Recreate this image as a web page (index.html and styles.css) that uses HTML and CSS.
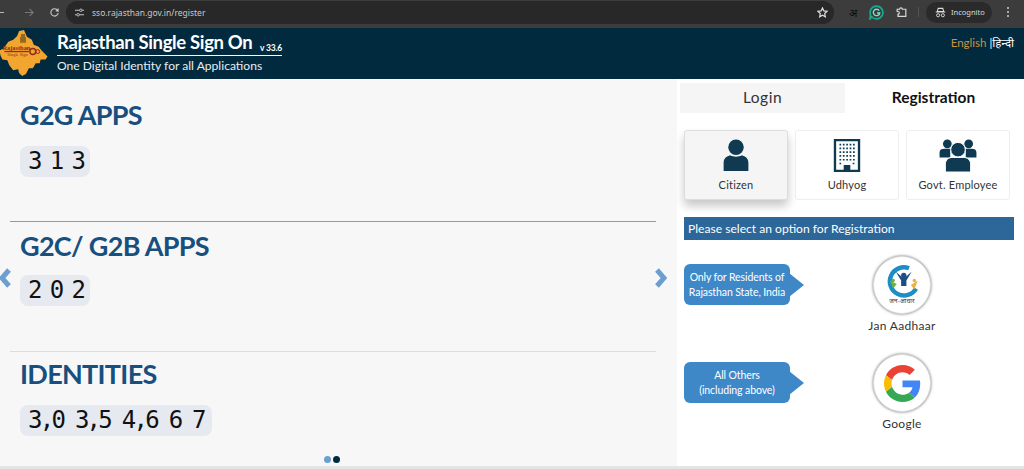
FILE: index.html
```html
<!DOCTYPE html>
<html lang="en">
<head>
<meta charset="utf-8">
<title>Rajasthan Single Sign On</title>
<link rel="stylesheet" href="styles.css">
</head>
<body>
<div class="toolbar">
  <div class="nav">
    <svg class="ico back" viewBox="0 0 12 12"><path d="M11 6H2M6 2 2 6l4 4" fill="none" stroke="#b9b9b9" stroke-width="1.2"/></svg>
    <svg class="ico fwd" viewBox="0 0 12 12"><path d="M1 6h9M6 2l4 4-4 4" fill="none" stroke="#777" stroke-width="1.2"/></svg>
    <svg class="ico" viewBox="0 0 12 12"><path d="M10 6.5A4 4 0 1 1 8.8 3L10 4.2V1.5M10 4.2H7.4" fill="none" stroke="#c8c8c8" stroke-width="1.2"/></svg>
  </div>
  <div class="omnibox">
    <svg class="tune" viewBox="0 0 12 10"><path d="M1 2.5h5M9 2.5h2M1 7.5h2M6 7.5h5" stroke="#c8c8c8" stroke-width="1.1"/><circle cx="7.5" cy="2.5" r="1.4" fill="none" stroke="#c8c8c8"/><circle cx="4.5" cy="7.5" r="1.4" fill="none" stroke="#c8c8c8"/></svg>
    <span class="url">sso.rajasthan.gov.in/register</span>
    <svg class="star" viewBox="0 0 12 12"><path d="m6 1 1.5 3.3 3.5.4-2.6 2.4.7 3.6L6 8.900 2.900 10.700l.7-3.600L1 4.700l3.500-.4z" fill="none" stroke="#dedede" stroke-width="1.3"/></svg>
  </div>
  <div class="ext">
    <span class="ext-a">अ</span>
    <svg class="ext-g" viewBox="0 0 14 14"><path d="M7 1a6 6 0 1 1-4.500 10L1 13l.4-4A6 6 0 0 1 7 1z" fill="none" stroke="#17a98d" stroke-width="1.600"/><path d="M9.500 5.200A3 3 0 1 0 10 7.500H7.500" fill="none" stroke="#7fe0cf" stroke-width="1.300"/></svg>
    <svg class="ext-p" viewBox="0 0 12 12"><path d="M2 3h2.200a1.300 1.300 0 0 1 2.600 0H10v6.500H2.800V7.500a1.200 1.200 0 0 0 0-2.400H2z" fill="none" stroke="#d8d8d8" stroke-width="1.100"/></svg>
    <i class="ext-sep"></i>
    <div class="incognito">
      <svg viewBox="0 0 12 12"><path d="M3.500 1.500h5l1 3.500h-7zM.8 5.500h10.400" fill="none" stroke="#ddd" stroke-width="1.100"/><circle cx="3.400" cy="9" r="1.700" fill="none" stroke="#ddd"/><circle cx="8.600" cy="9" r="1.700" fill="none" stroke="#ddd"/></svg>
      <span>Incognito</span>
    </div>
    <span class="kebab"><i></i><i></i><i></i></span>
  </div>
</div>

<header class="site-head">
  <svg class="logo" viewBox="0 0 48 48">
    <path d="M19 1l5-1 3 7 5 3 2 5 5 2 3 4 6 6-2 3-5 0-1 4-4 0-3 5-4 0-3 6-4 2-3-3-1-4-5 1-4-5-2-5-5-1-2-4-1-5 4-2 5-7 5-2 4-4z" fill="#f2a52f"/>
    <path d="M21 4h4v2l1 2v5h-6V8l1-2z" fill="#8f6a1f"/>
    <text class="logo-text" x="2" y="20">Rajasthan</text>
    <path d="M4 22h25" stroke="#8d2c1c" stroke-width="1.300"/>
    <circle cx="33" cy="22" r="3" fill="none" stroke="#8d2c1c" stroke-width="1.500"/>
    <circle cx="38" cy="22" r="2" fill="none" stroke="#8d2c1c"/>
    <text class="logo-text logo-small" x="7" y="27">Single Sign</text>
  </svg>
  <div class="brand">
    <div class="brand-top"><span class="brand-name">Rajasthan Single Sign On</span><span class="brand-ver">v 33.6</span></div>
    <div class="brand-sub">One Digital Identity for all Applications</div>
  </div>
  <div class="lang"><span class="lang-on">English</span> <span class="lang-off">|हिन्दी</span></div>
</header>

<main class="main">
  <section class="stats">
    <span class="arrow arrow-l"><svg viewBox="0 0 12 20"><path d="M10 2 3 10l7 8" fill="none" stroke="#6a9fd0" stroke-width="5"/></svg></span>
    <span class="arrow arrow-r"><svg viewBox="0 0 12 20"><path d="M2 2l7 8-7 8" fill="none" stroke="#6a9fd0" stroke-width="5"/></svg></span>
    <div class="stat stat-first">
      <h2>G2G APPS</h2>
      <div class="count">3 1 3</div>
    </div>
    <div class="stat stat-second">
      <h2>G2C/ G2B APPS</h2>
      <div class="count">2 0 2</div>
    </div>
    <div class="stat stat-last">
      <h2>IDENTITIES</h2>
      <div class="count count-wide">3,0 3,5 4,6 6 7</div>
    </div>
    <div class="dots"><i class="dot"></i><i class="dot dot-on"></i></div>
  </section>

  <aside class="side">
    <div class="tabs">
      <div class="tab tab-off">Login</div>
      <div class="tab tab-on">Registration</div>
    </div>
    <div class="cards">
      <div class="card card-on">
        <svg class="card-ico" viewBox="0 0 26 32"><circle cx="13" cy="8" r="7.500" fill="#0f3a52"/><path d="M1 31v-8c0-5 4-7 7-7 1.500 1.500 8.500 1.500 10 0 3 0 7 2 7 7v8z" fill="#0f3a52"/></svg>
        <span>Citizen</span>
      </div>
      <div class="card">
        <svg class="card-ico" viewBox="0 0 28 35"><path d="M0 0h28v35H0z" fill="#0f3a52"/><path d="M2.500 2.500h23v30h-8v-5h-7v5h-8z" fill="#fff"/><path d="M6 6h17M6 10h17M6 14h17M6 18h17M6 22h17M6 26h3M20 26h3" stroke="#0f3a52" stroke-width="1.800" stroke-dasharray="1.800 1.800"/></svg>
        <span>Udhyog</span>
      </div>
      <div class="card">
        <svg class="card-ico card-ico-wide" viewBox="0 0 38 34"><circle cx="8" cy="5" r="4.500" fill="#0f3a52"/><circle cx="30" cy="5" r="4.500" fill="#0f3a52"/><path d="M0 19v-5c0-3 2-4 5-4h6v9zM38 19v-5c0-3-2-4-5-4h-6v9z" fill="#0f3a52"/><circle cx="19" cy="11" r="7.500" fill="#0f3a52" stroke="#fff"/><path d="M6 34v-8c0-5 4-7 7-7h12c3 0 7 2 7 7v8z" fill="#0f3a52" stroke="#fff"/></svg>
        <span>Govt. Employee</span>
      </div>
    </div>
    <div class="notice">Please select an option for Registration</div>
    <div class="option">
      <div class="bubble"><span>Only for Residents of<br>Rajasthan State, India</span></div>
      <div class="provider">
        <div class="round">
          <svg viewBox="0 0 50 50">
            <path d="M33 6a16 16 0 1 0 8 23" fill="none" stroke="#1c8dc5" stroke-width="5"/>
            <circle cx="27" cy="14" r="3" fill="#1f4d86"/>
            <path d="M18 10l6 10v6h6v-6l6-10-7 6h-4z" fill="#1f4d86"/>
            <circle cx="15" cy="20" r="2" fill="#6cb13f"/><path d="M11 20l4 9 4-5z" fill="#6cb13f"/>
            <circle cx="39" cy="20" r="2" fill="#efb03f"/><path d="M43 20l-4 10-4-5z" fill="#efb03f"/>
            <text class="ja-text" x="25" y="46">जन-आधार</text>
          </svg>
        </div>
        <span>Jan Aadhaar</span>
      </div>
    </div>
    <div class="option">
      <div class="bubble"><span class="center">All Others<br>(including above)</span></div>
      <div class="provider">
        <div class="round">
          <svg viewBox="0 0 48 48" class="g">
            <path fill="#EA4335" d="M24 9.500c3.540 0 6.710 1.220 9.210 3.600l6.850-6.850C35.900 2.380 30.470 0 24 0 14.620 0 6.510 5.380 2.560 13.220l7.980 6.190C12.430 13.720 17.740 9.500 24 9.500z"/>
            <path fill="#4285F4" d="M46.980 24.550c0-1.570-.15-3.090-.38-4.550H24v9.020h12.940c-.58 2.960-2.260 5.480-4.780 7.180l7.730 6c4.510-4.180 7.090-10.360 7.090-17.650z"/>
            <path fill="#FBBC05" d="M10.530 28.590c-.48-1.450-.76-2.990-.76-4.590s.27-3.140.76-4.590l-7.980-6.190C.92 16.460 0 20.120 0 24c0 3.880.92 7.540 2.560 10.780l7.970-6.190z"/>
            <path fill="#34A853" d="M24 48c6.480 0 11.930-2.130 15.890-5.810l-7.730-6c-2.150 1.450-4.920 2.300-8.160 2.300-6.260 0-11.570-4.220-13.470-9.910l-7.980 6.190C6.510 42.620 14.620 48 24 48z"/>
          </svg>
        </div>
        <span>Google</span>
      </div>
    </div>
  </aside>
</main>
</body>
</html>
```
FILE: styles.css
```css
* { box-sizing: border-box; }
html, body { margin: 0; height: 469px; overflow: hidden; }
body { width: 1024px; background: #e4e4e4; font-family: Lato, "Noto Sans", "Noto Sans CJK SC", sans-serif; color: #333; }

.toolbar { display: flex; align-items: center; height: 28px; background: #3c3c3c; padding-bottom: 4px; font-family: "Noto Sans", sans-serif; }
.nav { display: flex; align-items: center; width: 66px; gap: 14px; flex: none; }
.ico { width: 11px; height: 11px; flex: none; }
.back { margin-left: -6px; }
.fwd { margin-left: 5px; }
.omnibox { display: flex; align-items: center; width: 768px; height: 23px; border-radius: 12px; background: #282828; padding: 0 8px; }
.tune { width: 11px; height: 9px; margin-right: 7px; }
.url { font-size: 8.5px; color: #c9c9c9; flex: 1; }
.star { width: 11px; height: 11px; margin-right: -2px; }
.ext { display: flex; align-items: center; flex: 1; height: 23px; }
.ext-a { font-size: 11px; color: #0a0a0a; margin-left: 15px; width: 12px; }
.ext-g { width: 15px; height: 15px; margin-left: 8px; }
.ext-p { width: 13px; height: 13px; margin-left: 11px; }
.ext-sep { width: 1px; height: 10px; background: #555; margin-left: 10px; }
.incognito { display: flex; align-items: center; gap: 5px; width: 66px; height: 21px; border-radius: 11px; background: #2a2a2a; margin-left: 7px; padding-left: 9px; font-size: 7.5px; color: #ddd; }
.incognito svg { width: 11px; height: 11px; }
.kebab { display: flex; flex-direction: column; gap: 2px; margin-left: 15px; }
.kebab i { width: 2px; height: 2px; border-radius: 50%; background: #ccc; }

.site-head { display: flex; height: 51px; background: #012a3f; }
.logo { width: 48px; height: 47px; margin-top: 2px; flex: none; }
.logo-text { font-size: 6.500px; fill: #8d2c1c; font-family: "Liberation Serif", serif; font-weight: 700; }
.logo-small { font-size: 4.500px; font-weight: 400; }
.brand { margin-left: 9px; width: 225px; color: #fff; }
.brand-top { display: flex; justify-content: space-between; align-items: flex-end; height: 28px; border-bottom: 1px solid #fff; }
.brand-name { font-size: 18.500px; line-height: 26px; font-weight: 700; letter-spacing: -.35px; white-space: nowrap; }
.brand-ver { font-size: 8.500px; font-weight: 700; line-height: 14px; white-space: nowrap; letter-spacing: -.2px; }
.brand-sub { font-size: 12.100px; line-height: 20px; white-space: nowrap; color: #e8eef2; }
.lang { margin-left: auto; padding: 7px 10px 0 0; font-size: 11.500px; line-height: 16px; white-space: nowrap; }
.lang-on { color: #c8923f; }
.lang-off { color: #fff; }

.main { display: flex; height: 387px; }
.stats { width: 677px; background: #f7f7f8; padding: 0 21px 0 10px; position: relative; flex: none; }
.stat { height: 130px; border-bottom: 1px solid #7f9fc0; padding-left: 10px; }
.stat-first { height: 143px; padding-top: 18px; }
.stat-second { border-bottom-color: #cfe0f0; padding-top: 6px; }
.stat-last { border-bottom: 0; height: 114px; padding-top: 4px; }
.stat h2 { margin: 0; font-size: 27px; line-height: 36px; font-weight: 700; letter-spacing: -.7px; color: #174f7e; }
.count { display: inline-block; height: 31px; margin-top: 11px; padding: 0 8px; border-radius: 8px; background: #e6e9ef; font-family: "DejaVu Sans Mono", monospace; font-size: 24px; line-height: 31px; color: #111; white-space: nowrap; letter-spacing: -3.6px; }
.stat-first .count { margin-top: 13px; }
.count-wide { margin-top: 13px; letter-spacing: -2.73px; }
.arrow { position: absolute; top: 189px; width: 12px; height: 20px; }
.arrow svg { display: block; width: 12px; height: 20px; }
.arrow-l { left: -1px; }
.arrow-r { left: 655px; }
.dots { position: absolute; left: 324px; top: 377px; display: flex; gap: 2px; }
.dot { width: 7px; height: 7px; border-radius: 50%; background: #6a9fd0; }
.dot-on { background: #012a3f; }

.side { flex: 1; height: 387px; background: #fff; padding: 4px 10px 0 7px; }
.tabs { display: flex; height: 30px; margin: 0 -10px 0 -4px; }
.tab { width: 165px; text-align: center; font-size: 15.500px; line-height: 29px; color: #333; letter-spacing: .5px; }
.tab-off { background: #f5f5f5; }
.tab-on { flex: 1; color: #111; font-weight: 700; letter-spacing: 0; padding-right: 2px; }
.cards { display: flex; gap: 7px; margin-top: 17px; }
.card { display: flex; flex-direction: column; align-items: center; width: 104px; height: 70px; border: 1px solid #eee; border-radius: 3px; padding-top: 8px; font-size: 11px; color: #333; letter-spacing: .2px; }
.card span { margin-top: auto; padding-bottom: 7px; line-height: 14px; white-space: nowrap; }
.card-on { background: #f5f5f5; border-color: #ddd; box-shadow: 0 6px 10px rgba(0,0,0,.22); }
.card-ico { height: 33px; width: 28px; }
.card-ico-wide { width: 38px; }
.notice { height: 23px; margin-top: 17px; padding-left: 4px; background: #2d6698; color: #fff; font-size: 12.100px; line-height: 23px; }
.option { display: flex; height: 98px; }
.notice + .option { margin-top: 14px; }
.bubble { position: relative; display: flex; align-items: center; justify-content: center; width: 106px; height: 41px; margin-top: 10px; border-radius: 6px; background: #3f88c8; color: #fff; font-size: 10.500px; line-height: 15px; text-align: center; white-space: nowrap; letter-spacing: -.1px; }
.bubble::after { content: ""; position: absolute; left: 105px; top: 9px; border-left: 15px solid #3f88c8; border-top: 12px solid transparent; border-bottom: 12px solid transparent; }
.provider { display: flex; flex-direction: column; align-items: center; width: 120px; margin-left: 52px; padding-top: 2px; font-size: 12px; color: #333; white-space: nowrap; letter-spacing: .3px; }
.round { display: flex; align-items: center; justify-content: center; width: 58px; height: 58px; border-radius: 50%; background: #fff; border: 1px solid #ddd; box-shadow: 0 0 3px rgba(0,0,0,.6); margin-bottom: 4px; flex: none; }
.round svg { width: 44px; height: 44px; }
.round svg.g { width: 37px; height: 37px; }
.ja-text { font-size: 7px; fill: #333; text-anchor: middle; font-family: "Noto Sans", "DejaVu Sans", sans-serif; }
```
